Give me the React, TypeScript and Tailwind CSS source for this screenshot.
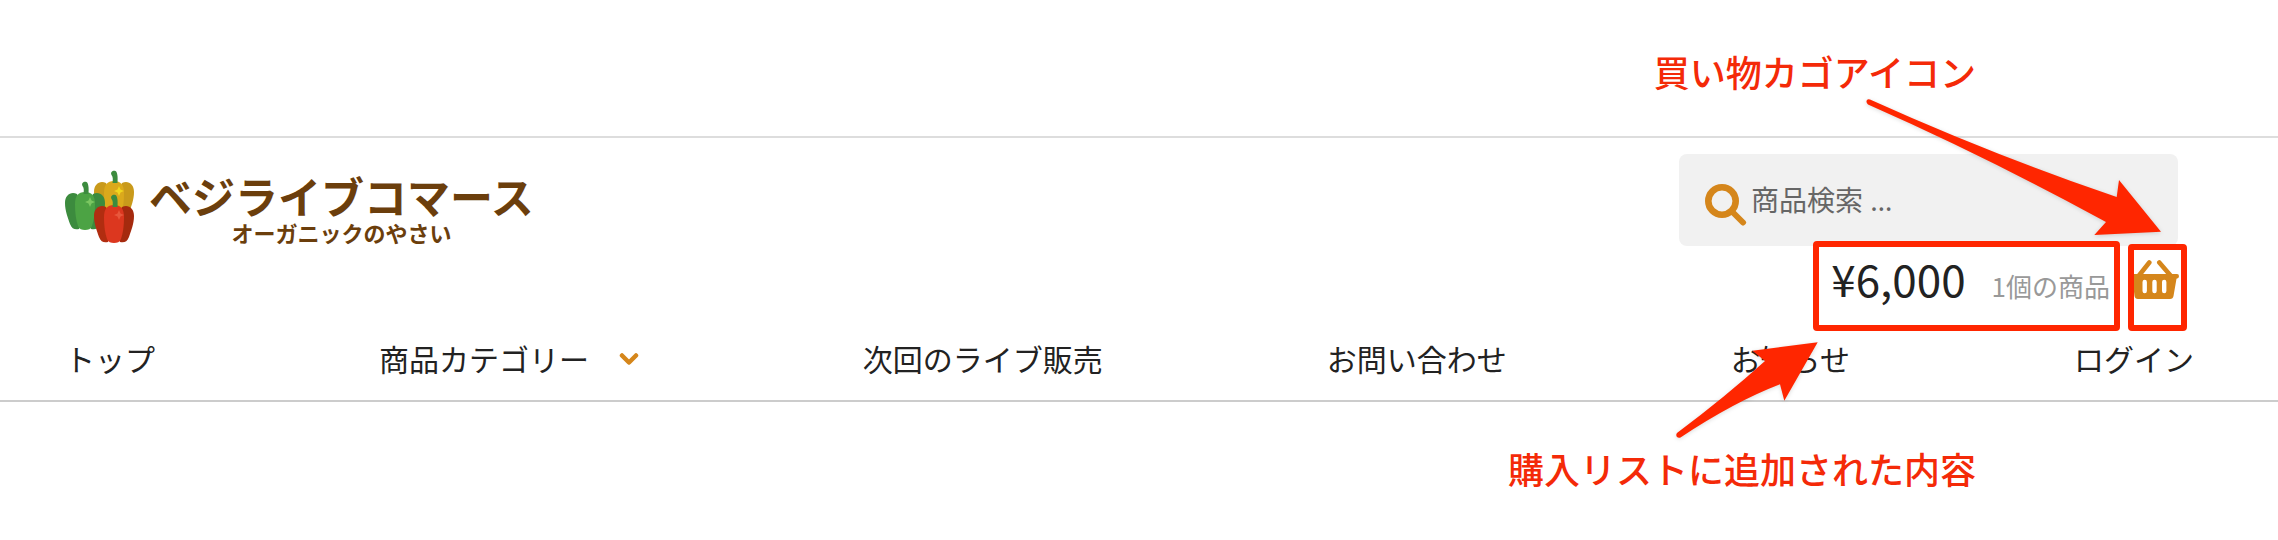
import React from 'react';

interface NavItem {
  label: string;
  hasMenu?: boolean;
}

const navItems: NavItem[] = [
  { label: 'トップ' },
  { label: '商品カテゴリー', hasMenu: true },
  { label: '次回のライブ販売' },
  { label: 'お問い合わせ' },
  { label: 'お知らせ' },
  { label: 'ログイン' },
];

interface PepperProps {
  x: number;
  y: number;
  side: string;
  shade: string;
  front: string;
  shine: string;
  stem: string;
}

const Pepper: React.FC<PepperProps> = ({ x, y, side, shade, front, shine, stem }) => (
  <g transform={`translate(${x} ${y})`}>
    <path d="M12 12C6 9 0 13 0 21C0 29 3 36 5 42C7 47 10 48 14 47L20 30Z" fill={side} />
    <path d="M28 12C34 9 40 13 40 21C40 29 37 36 35 42C33 47 30 48 26 47L20 30Z" fill={shade} />
    <path d="M20 10C13 10 10 14 10 22C10 31 11 38 13 44C14 47 17 48 20 48C23 48 26 47 27 44C29 38 30 31 30 22C30 14 27 10 20 10Z" fill={front} />
    <path d="M18.500 12C19 8 19 6 17.500 4C16 1 19 -1 21.500 0C23.500 1 24 6 23.500 12Z" fill={stem} />
    <path d="M25 15L26.500 18.500L30 20L26.500 21.500L25 25L23.500 21.500L20 20L23.500 18.500Z" fill={shine} />
  </g>
);

const Logo: React.FC = () => (
  <a href="#" className="flex items-start text-[#6b3e0c]">
    <svg viewBox="0 0 70 74" className="h-[74px] w-[70px]" aria-hidden="true">
      <Pepper x={29} y={1} side="#c99a1b" shade="#c99a1b" front="#dba91c" shine="#f0d61f" stem="#3c8b3e" />
      <Pepper x={0} y={12} side="#3c8b3e" shade="#3c8b3e" front="#4ca344" shine="#7ac661" stem="#3c8b3e" />
      <Pepper x={29} y={25} side="#b12d10" shade="#a52a0e" front="#dc371f" shine="#e8573c" stem="#3c8b3e" />
    </svg>
    <span className="ml-3.5 flex flex-col items-center font-bold">
      <span className="text-[43px] leading-[50px]">ベジライブコマース</span>
      <span className="text-[22px] leading-6">オーガニックのやさい</span>
    </span>
  </a>
);

const SearchBox: React.FC = () => (
  <label className="mr-4 flex h-[92px] w-[499px] items-center rounded-lg bg-[#f1f1f1] pl-[26px]">
    <svg viewBox="0 0 42 42" className="mt-2.5 size-[42px] shrink-0" fill="none" stroke="#d5861b" aria-hidden="true">
      <circle cx="17" cy="17" r="13.700" strokeWidth="6.600" />
      <path d="M28 28.500L38 38.500" strokeWidth="6" strokeLinecap="round" />
    </svg>
    <input
      type="search"
      aria-label="商品検索"
      placeholder="商品検索 …"
      className="ml-1 min-w-0 flex-1 bg-transparent font-['Noto_Sans','Noto_Sans_CJK_JP',sans-serif] text-[28px] leading-10 outline-none placeholder:text-[#666]"
    />
  </label>
);

const BasketIcon: React.FC = () => (
  <svg viewBox="4 0 45 39" className="h-[39px] w-[45px] shrink-0" aria-hidden="true">
    <path d="M19.300 2.500L9 15.500M29.300 2.500L40.500 15.500" fill="none" stroke="#d5861b" strokeWidth="4.600" strokeLinecap="round" />
    <path
      d="M2 14H47Q49 14 49 16.200Q49 18.500 46.500 18.800L43.500 36Q43 39 40 39H8Q5 39 4.500 36L2.500 18.500Q0 18.500 0 16.200Q0 14 2 14ZM12.500 22V31A2.200 2.200 0 0 0 16.900 31V22A2.200 2.200 0 0 0 12.500 22ZM22.300 22V31A2.200 2.200 0 0 0 26.700 31V22A2.200 2.200 0 0 0 22.300 22ZM32 22V31A2.200 2.200 0 0 0 36.400 31V22A2.200 2.200 0 0 0 32 22Z"
      fill="#d5861b"
      fillRule="evenodd"
    />
  </svg>
);

const Arrows: React.FC = () => (
  <svg
    viewBox="-40 0 640 540"
    className="pointer-events-none absolute top-0 right-0 h-[540px] w-[640px] drop-shadow-sm"
    fill="#ff2600"
    aria-hidden="true"
  >
    <path d="M192 99.500Q315 155 438.700 197L441 180L483 231.700L416.300 235L428 222Q309 157 190 104.500Q187.500 102 189 100Q190 98.700 192 99.500Z" />
    <path d="M139.700 342.300L74.300 350.700L87 361Q46 398 -0.700 432.700Q-2.500 434.500 -1.200 436.700Q0.300 438.500 2.500 437.500Q56 402 102 384.300L106.300 400.700Z" />
  </svg>
);

const App: React.FC = () => {
  return (
    <div className="relative bg-white font-['Noto_Sans_CJK_JP',sans-serif] text-[#222]">
      <p className="flex h-[136px] justify-end pt-11 pr-[302px] text-[36px] leading-[54px] font-medium text-[#f42a08]">
        買い物カゴアイコン
      </p>

      <header className="border-y-2 border-t-[#ddd] border-b-[#ccc] pr-[84px] pl-[65px]">
        <div className="flex items-start justify-between pt-4">
          <div className="pt-4">
            <Logo />
          </div>
          <div className="flex flex-col items-end">
            <SearchBox />
            <div className="-mt-[5px] mr-[7px] flex items-start gap-2">
              <a
                href="#"
                className="flex h-[90px] items-baseline gap-[26px] rounded-sm border-6 border-[#ff2600] bg-white pr-1 pl-3"
              >
                <span className="text-[44px] leading-[62px]">¥6,000</span>
                <span className="text-[26px] text-[#999]">1個の商品</span>
              </a>
              <a
                href="#"
                aria-label="カゴ"
                className="mt-[3px] flex h-[87px] w-[59px] rounded-sm border-6 border-[#ff2600] bg-white pt-2.5"
              >
                <BasketIcon />
              </a>
            </div>
          </div>
        </div>

        <nav className="pt-[5px] pb-5">
          <ul className="flex justify-between text-[30px] leading-[44px]">
            {navItems.map(item => (
              <li key={item.label}>
                <a href="#" className="flex items-center gap-[30px]">
                  {item.label}
                  {item.hasMenu && (
                    <svg viewBox="0 0 20 12" className="mt-0.5 h-3 w-5" fill="none" stroke="#d5861b" strokeWidth="4.500" strokeLinecap="round" strokeLinejoin="round" aria-hidden="true">
                      <path d="M3 2.500L10 9.500L17 2.500" />
                    </svg>
                  )}
                </a>
              </li>
            ))}
          </ul>
        </nav>
      </header>

      <p className="flex justify-end pt-[39px] pr-[302px] pb-11 text-[36px] leading-[54px] font-medium text-[#f42a08]">
        購入リストに追加された内容
      </p>

      <Arrows />
    </div>
  );
};

export default App;
